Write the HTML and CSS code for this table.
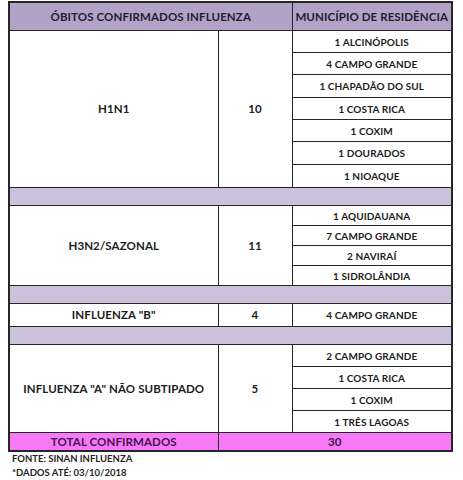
FILE: index.html
```html
<!DOCTYPE html>
<html lang="pt-BR">
<head>
<meta charset="utf-8">
<link rel="stylesheet" href="styles.css">
</head>
<body>
<table class="tbl">
  <colgroup><col class="c1"><col class="c2"><col class="c3"></colgroup>
  <tr class="head">
    <th colspan="2">ÓBITOS CONFIRMADOS INFLUENZA</th>
    <th>MUNICÍPIO DE RESIDÊNCIA</th>
  </tr>
  <tr class="r22"><td rowspan="7" class="big">H1N1</td><td rowspan="7" class="big">10</td><td>1 ALCINÓPOLIS</td></tr>
  <tr class="r22"><td>4 CAMPO GRANDE</td></tr>
  <tr class="r23"><td>1 CHAPADÃO DO SUL</td></tr>
  <tr class="r22"><td>1 COSTA RICA</td></tr>
  <tr class="r22"><td>1 COXIM</td></tr>
  <tr class="r23"><td>1 DOURADOS</td></tr>
  <tr class="r23"><td>1 NIOAQUE</td></tr>
  <tr class="band b19"><td colspan="3"></td></tr>
  <tr class="r20"><td rowspan="4" class="big">H3N2/SAZONAL</td><td rowspan="4" class="big">11</td><td>1 AQUIDAUANA</td></tr>
  <tr class="r20"><td>7 CAMPO GRANDE</td></tr>
  <tr class="r20"><td>2 NAVIRAÍ</td></tr>
  <tr class="r20"><td>1 SIDROLÂNDIA</td></tr>
  <tr class="band b18"><td colspan="3"></td></tr>
  <tr class="r23"><td class="big">INFLUENZA "B"</td><td class="big">4</td><td>4 CAMPO GRANDE</td></tr>
  <tr class="band b18"><td colspan="3"></td></tr>
  <tr class="r22"><td rowspan="4" class="big">INFLUENZA "A" NÃO SUBTIPADO</td><td rowspan="4" class="big">5</td><td>2 CAMPO GRANDE</td></tr>
  <tr class="r22"><td>1 COSTA RICA</td></tr>
  <tr class="r22"><td>1 COXIM</td></tr>
  <tr class="r22"><td>1 TRÊS LAGOAS</td></tr>
  <tr class="total"><td class="big">TOTAL CONFIRMADOS</td><td colspan="2" class="big">30</td></tr>
</table>
<div class="notes">
  <p>FONTE: SINAN INFLUENZA</p>
  <p>*DADOS ATÉ: 03/10/2018</p>
</div>
</body>
</html>
```
FILE: styles.css
```css
html, body {
  margin: 0;
  padding: 0;
  background: #ffffff;
}
body {
  font-family: "Lato", "Open Sans", sans-serif;
  font-weight: 700;
  color: #1c1c1c;
}
.tbl {
  margin: 1px 0 0 8px;
  border-collapse: collapse;
  table-layout: fixed;
  width: 445px;
  border: 2px solid #262626;
}
.c1 { width: 209px; }
.c2 { width: 74px; }
.c3 { width: 160px; }
.tbl th, .tbl td {
  border: 1.5px solid #262626;
  padding: 0;
  text-align: center;
  vertical-align: middle;
  font-size: 10px;
  line-height: 12px;
  letter-spacing: 0.1px;
}
.tbl th {
  font-size: 11.5px;
  height: 27px;
  background: #b3a2c8;
  color: #231c2e;
}
.tbl td.big {
  font-size: 11.5px;
}
.r20 td { height: 19px; }
.r21 td { height: 20px; }
.r22 td { height: 21px; }
.r23 td { height: 22px; }
.r24 td { height: 23px; }
.band td {
  background: #ccc1db;
}
.b19 td { height: 17px; }
.b18 td { height: 17px; }
.total td {
  background: #f67af6;
  color: #451252;
  height: 17px;
}
.notes {
  margin: 0 0 0 12px;
  font-size: 9.5px;
  line-height: 14px;
  color: #242424;
}
.notes p {
  margin: 0;
}
```
